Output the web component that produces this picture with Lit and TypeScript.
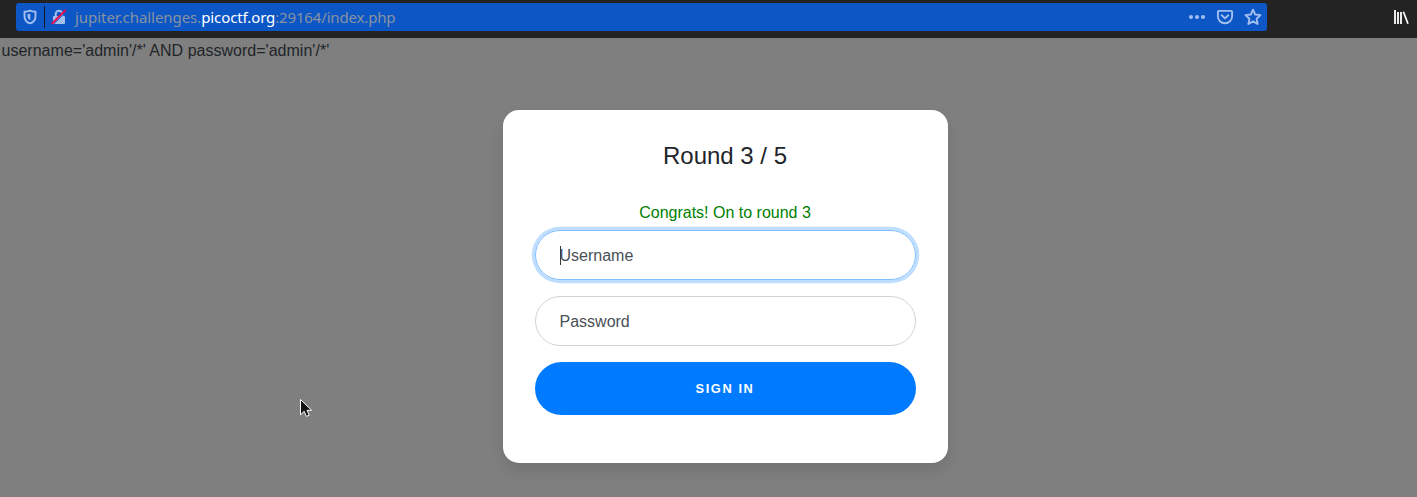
import { LitElement, html, css } from "lit";
import { customElement } from "lit/decorators.js";

@customElement("browser-bar")
class BrowserBar extends LitElement {
  static styles = css`
    :host { display: flex; height: 38px; background: #232323; padding: 3px 8px 0 16px; box-sizing: border-box; align-items: flex-start; justify-content: space-between; }
    .field { display: flex; align-items: center; box-sizing: border-box; width: 1251px; height: 28px; background: #0c56c6; border-radius: 3px; padding: 0 5px 0 6px; color: #a3bff0; }
    svg { display: block; flex: none; }
    .divider { width: 1px; height: 22px; background: #14171d; margin: 0 6px 0 6px; }
    .url { flex: 1; margin-left: 8px; font: 15px/28px "Noto Sans", sans-serif; letter-spacing: -0.050px; color: #8892a0; white-space: nowrap; }
    .url b { font-weight: 400; color: #fff; letter-spacing: -0.110px; }
    .url .path { letter-spacing: -0.160px; }
    .actions { display: flex; gap: 10px; }
    .library { margin-top: 5px; }
  `;
  render() {
    return html`
      <div class="field">
        <svg width="16" height="16" viewBox="0 0 16 16" fill="none">
          <path d="M8 1.700c1.800.7 3.600 1 5.500 1.100v4.400c0 3.600-2.200 6.200-5.500 7.200-3.300-1-5.500-3.600-5.500-7.200V2.800C4.400 2.700 6.200 2.400 8 1.700z" stroke="currentColor" stroke-width="1.900" stroke-linejoin="round"/>
          <path d="M8.300 4.700v6.600C6.500 10.500 5.500 9 5.500 7V5.200C6.400 5.100 7.400 5 8.300 4.700z" fill="currentColor"/>
        </svg>
        <div class="divider"></div>
        <svg width="16" height="16" viewBox="0 0 16 16" fill="none">
          <path d="M4.700 8V5a3.300 3.300 0 0 1 6.600 0v3" stroke="currentColor" stroke-width="2"/>
          <rect x="2" y="7" width="12" height="8" rx="1" fill="currentColor"/>
          <path d="M2.600 15.200L15.500 2.300" stroke="#0c56c6" stroke-width="1"/>
          <path d="M1.400 14.200L14.200 1.400" stroke="#f2064c" stroke-width="2" stroke-linecap="round"/>
        </svg>
        <div class="url">jupiter.challenges.<b>picoctf.org</b><span class="path">:29164/index.php</span></div>
        <div class="actions">
          <svg width="18" height="18" viewBox="0 0 18 18" fill="currentColor">
            <circle cx="3" cy="9" r="2"/><circle cx="9" cy="9" r="2"/><circle cx="15" cy="9" r="2"/>
          </svg>
          <svg width="18" height="18" viewBox="0 0 18 18" fill="none" stroke="currentColor" stroke-width="1.900" stroke-linecap="round" stroke-linejoin="round">
            <path d="M2.900 2.900h12.200a1 1 0 0 1 1 1v4.300a7.100 7.100 0 0 1-14.200 0V3.900a1 1 0 0 1 1-1z"/>
            <path d="M5.700 7.200L9 10.400l3.300-3.200"/>
          </svg>
          <svg width="18" height="18" viewBox="0 0 18 18" fill="none" stroke="currentColor" stroke-width="1.900" stroke-linejoin="round">
            <path d="M9 1.700l2.200 4.800 5.300.6-3.900 3.600 1 5.300L9 13.400l-4.600 2.600 1-5.300L1.500 7.100l5.300-.6z"/>
          </svg>
        </div>
      </div>
      <svg class="library" width="16" height="18" viewBox="0 0 16 18" fill="none" stroke="#fff">
        <path d="M2 2v14M5 4v12M8 4v12" stroke-width="1.800"/>
        <path d="M10.400 3.700L15 15.800" stroke-width="1.700"/>
      </svg>
    `;
  }
}

@customElement("app-root")
class AppRoot extends LitElement {
  static styles = css`
    :host { display: block; position: relative; height: 497px; overflow: hidden; background: #7f7f7f; color: #212529; font: 16px/24px "Liberation Sans", Arial, sans-serif; }
    .query { box-sizing: border-box; height: 24px; padding: 1px 0 0 1.500px; white-space: pre; letter-spacing: 0.018px; }
    .card { box-sizing: border-box; width: 445px; height: 353px; margin: 48px 0 0 503px; padding: 31px 32px 32px; background: #fff; border-radius: 16px; box-shadow: 0 8px 16px rgba(0, 0, 0, 0.1); display: flex; flex-direction: column; }
    h1 { margin: 0 1px 0 0; font-size: 24px; font-weight: 400; line-height: 29px; text-align: center; }
    .message { margin: 31px 1px 0 0; color: green; text-align: center; height: 29px; line-height: 24px; }
    .input { display: flex; align-items: center; box-sizing: border-box; height: 50px; flex: none; margin-bottom: 16px; padding: 2px 24px 0 23.500px; border: 1px solid #ced4da; border-radius: 25px; color: #495057; }
    .focused { border-color: #80bdff; box-shadow: 0 0 0 3.200px rgba(0, 123, 255, 0.25); }
    .caret { width: 1px; height: 19px; background: #343a40; margin: 0 -1.500px 2px 0.500px; }
    .submit { border: 0; height: 53px; flex: none; padding: 0 1px 0 0; border-radius: 27px; background: #007bff; color: #fff; font: bold 12.800px/53px "Liberation Sans", Arial, sans-serif; letter-spacing: 1.600px; }
    .cursor { position: absolute; left: 299px; top: 398px; display: block; }
  `;
  render() {
    return html`
      <browser-bar></browser-bar>
      <div class="query">username='admin'/*' AND password='admin'/*'</div>
      <div class="card">
        <h1>Round 3 / 5</h1>
        <div class="message">Congrats! On to round 3</div>
        <div class="input focused"><span class="caret"></span>Username</div>
        <div class="input">Password</div>
        <button class="submit">SIGN IN</button>
      </div>
      <svg class="cursor" width="16" height="21" viewBox="0 0 16 21">
        <path d="M1.500 1.500v15.300l3.700-3.500 2.200 5.100 2.800-1.200-2.200-4.900h4.600z" fill="#111" stroke="#fff" stroke-width="1"/>
      </svg>
    `;
  }
}
